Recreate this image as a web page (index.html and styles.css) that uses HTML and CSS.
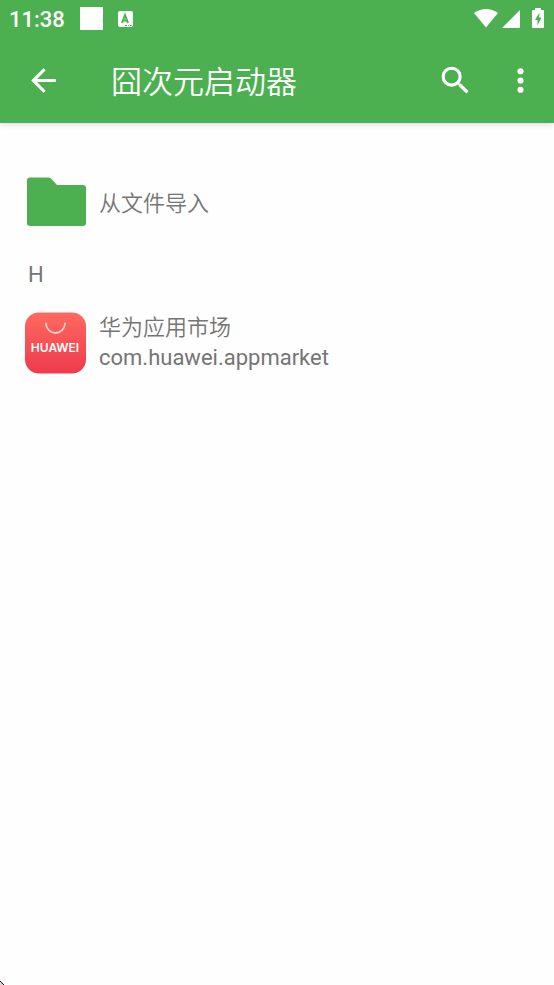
FILE: index.html
```html
<!DOCTYPE html>
<html lang="zh-CN">
<head>
<meta charset="utf-8">
<meta name="viewport" content="width=device-width, initial-scale=1">
<title>囧次元启动器</title>
<link rel="stylesheet" href="styles.css">
</head>
<body>
<header class="top">
  <div class="status">
    <time class="clock">11:38</time>
    <span class="square"></span>
    <svg class="notice" width="15" height="16" viewBox="0 0 15 16" aria-hidden="true">
      <rect width="15" height="16" rx="2" fill="#fff"/>
      <path d="M4 12 7 4 10 12M5 9.500H9" fill="none" stroke="#4caf50" stroke-width="2"/>
      <path d="M7 14.500H9M10 14.500H11M12 14.500H13.500" stroke="#4caf50"/>
    </svg>
    <span class="system">
      <svg width="24" height="19" viewBox="0 0 24 19" aria-hidden="true"><path d="M0 4Q12-4 24 4L12 18.500Z" fill="#fff"/></svg>
      <svg width="18" height="19" viewBox="0 0 18 19" aria-hidden="true"><path d="M18 1V18Q18 19 17 19H0Z" fill="#fff"/></svg>
      <svg width="12" height="20" viewBox="0 0 12 20" aria-hidden="true"><path d="M3 0H9V2H11Q12 2 12 3V19Q12 20 11 20H1Q0 20 0 19V3Q0 2 1 2H3Z" fill="#fff"/><path d="M7.500 4.500 3 12H5.500V17.500L9.500 9.500H7Z" fill="#4caf50"/></svg>
    </span>
  </div>
  <div class="toolbar">
    <button class="tool" type="button" aria-label="返回">
      <svg width="37" height="37" viewBox="0 0 24 24"><path d="M20 11H7.830l5.590-5.590L12 4l-8 8 8 8 1.410-1.410L7.830 13H20z" fill="#fff"/></svg>
    </button>
    <h1 class="title">囧次元启动器</h1>
    <button class="tool" type="button" aria-label="搜索">
      <svg width="37" height="37" viewBox="0 0 24 24"><path d="M15.500 14h-.790l-.280-.270A6.470 6.470 0 0 0 16 9.500 6.500 6.500 0 1 0 9.500 16c1.610 0 3.090-.590 4.230-1.570l.270.280v.790l5 4.990L20.490 19zm-6 0a4.500 4.500 0 1 1 0-9 4.500 4.500 0 0 1 0 9z" fill="#fff"/></svg>
    </button>
    <button class="tool" type="button" aria-label="更多选项">
      <svg width="37" height="37" viewBox="0 0 24 24"><g fill="#fff"><circle cx="12" cy="6" r="2"/><circle cx="12" cy="12" r="2"/><circle cx="12" cy="18" r="2"/></g></svg>
    </button>
  </div>
</header>
<main class="list">
  <button class="row" type="button">
    <svg class="icon" width="62" height="62" viewBox="0 0 62 62" aria-hidden="true"><path d="M5 6.500H23Q25 6.500 26 7.500L32 14H58Q61 14 61 17V52Q61 55 58 55H5Q2 55 2 52V9.500Q2 6.500 5 6.500Z" fill="#4caf50"/></svg>
    <span class="label action"><span class="name">从文件导入</span></span>
  </button>
  <h2 class="section">H</h2>
  <button class="row" type="button">
    <svg class="icon" width="62" height="62" viewBox="0 0 62 62" aria-hidden="true">
      <defs><linearGradient id="red" x1="0" y1="0" x2="0" y2="1"><stop offset="0" stop-color="#fe6a60"/><stop offset="1" stop-color="#ee3a4d"/></linearGradient></defs>
      <rect y="0.500" width="61" height="61" rx="14" fill="url(#red)"/>
      <path d="M21 11.500a9.500 9.500 0 0 0 19 0" fill="none" stroke="#ffd2cc" stroke-width="1.800" stroke-linecap="round"/>
      <text class="brand" x="30" y="40" text-anchor="middle">HUAWEI</text>
    </svg>
    <span class="label"><span class="name">华为应用市场</span><br>com.huawei.appmarket</span>
  </button>
</main>
<svg class="corner" width="4" height="4" viewBox="0 0 4 4" aria-hidden="true"><path d="M0 0 4 4H0Z" fill="#ddd5dc"/><path d="M0 0 4 4" stroke="#111" stroke-width="1"/></svg>
</body>
</html>
```
FILE: styles.css
```css
* {
  box-sizing: border-box;
}

body {
  margin: 0;
  min-height: 100vh;
  background: #fefefe;
  color: #757575;
  font-family: Roboto, "Noto Sans CJK SC", sans-serif;
  font-size: 22px;
}

button {
  padding: 0;
  border: 0;
  background: none;
  color: inherit;
  font: inherit;
  cursor: pointer;
}

svg {
  display: block;
  flex: none;
}

.top {
  background: #4caf50;
  color: #fff;
  box-shadow: 0 1px 6px rgba(0, 0, 0, 0.16);
}

.status {
  display: flex;
  align-items: center;
  height: 37px;
  padding: 0 10px 0 9px;
}

.clock {
  padding-top: 2px;
  font-weight: 500;
  line-height: 36px;
}

.square {
  width: 23px;
  height: 23px;
  margin: 0 15px;
  background: #fff;
}

.system {
  display: flex;
  align-items: flex-end;
  gap: 4px;
  margin-left: auto;
  padding-bottom: 1px;
}

.system svg:last-child {
  margin-left: 8px;
}

.toolbar {
  display: flex;
  align-items: center;
  height: 86px;
  padding: 0 1px 0 11px;
}

.tool {
  display: grid;
  place-items: center;
  width: 65px;
  height: 65px;
}

.title {
  flex: 1;
  margin: 0 0 0 35px;
  font-family: "Noto Sans CJK SC", sans-serif;
  font-size: 31px;
  font-weight: 350;
  line-height: 40px;
}

.list {
  padding: 48px 25px;
}

.row {
  display: flex;
  align-items: center;
  gap: 12px;
  width: 100%;
  text-align: left;
}

.label {
  line-height: 30px;
}

.action {
  padding-top: 4px;
}

.name {
  font-weight: 350;
}

.section {
  margin: 27px 3px 22px;
  font-size: 22px;
  font-weight: 400;
  line-height: 30px;
}

.brand {
  fill: #fff;
  font-family: Inter, sans-serif;
  font-size: 12px;
  font-weight: 600;
}

.corner {
  position: fixed;
  bottom: 0;
  left: 0;
}
```
